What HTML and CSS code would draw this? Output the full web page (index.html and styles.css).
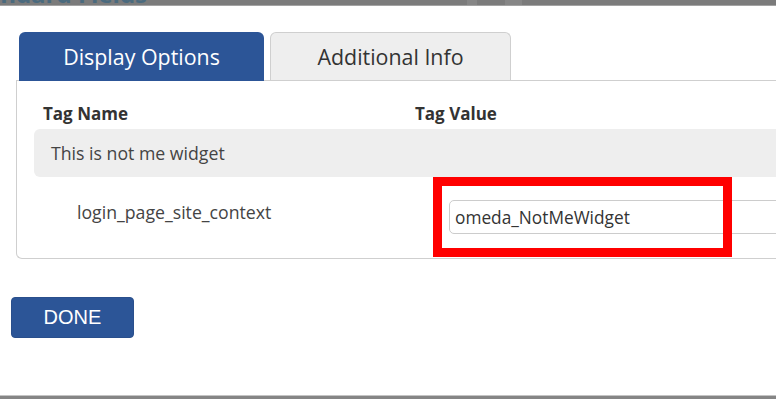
FILE: index.html
```html
<!DOCTYPE html>
<html>
<head>
<meta charset="utf-8">
<link rel="stylesheet" href="styles.css">
</head>
<body>
<div class="topbar">
  <span class="topbar-title">Standard Fields</span>
  <span class="topbar-patch p1"></span>
  <span class="topbar-patch p2"></span>
</div>
<div class="modal">
  <div class="tabs">
    <div class="tab tab-active">Display Options</div>
    <div class="tab tab-inactive">Additional Info</div>
  </div>
  <div class="panel">
    <div class="grid head">
      <div class="th">Tag Name</div>
      <div class="th">Tag Value</div>
    </div>
    <div class="group-row">This is not me widget</div>
    <div class="grid field-row">
      <div class="label">login_page_site_context</div>
      <div class="value">
        <input class="input" type="text" value="omeda_NotMeWidget">
        <div class="highlight"></div>
      </div>
    </div>
  </div>
  <div class="actions">
    <button class="done">DONE</button>
  </div>
</div>
<div class="bottombar"></div>
</body>
</html>
```

FILE: styles.css
```css
html, body {
  margin: 0;
  padding: 0;
  background: #ffffff;
  overflow: hidden;
  width: 776px;
  height: 409px;
}
body {
  font-family: "Open Sans", "DejaVu Sans", sans-serif;
  color: #333333;
}
.topbar {
  position: relative;
  height: 5px;
  background: #7b7b7b;
  border-bottom: 1px solid #a3a3a3;
  overflow: hidden;
}
.topbar-title {
  position: absolute;
  left: -38px;
  top: -20px;
  font-family: "Open Sans", sans-serif;
  font-weight: 700;
  font-size: 24px;
  line-height: 28px;
  color: #4a6a7e;
  white-space: nowrap;
}
.topbar-patch {
  position: absolute;
  top: 0;
  height: 5px;
  background: #868686;
}
.p1 { left: 467px; width: 10px; }
.p2 { left: 505px; width: 17px; }

.modal {
  height: 389px;
  background: #ffffff;
}
.tabs {
  display: flex;
  gap: 6px;
  padding: 26px 0 0 19px;
  position: relative;
  z-index: 2;
}
.tab {
  box-sizing: border-box;
  height: 49px;
  display: flex;
  align-items: center;
  justify-content: center;
  font-size: 21.4px;
  border-radius: 6px 6px 0 0;
}
.tab-active {
  width: 245px;
  background: #2c5597;
  color: #ffffff;
}
.tab-inactive {
  width: 241px;
  height: 48px;
  background: #eeeeee;
  color: #333333;
  border: 1px solid #cfcfcf;
  border-bottom: none;
}
.panel {
  box-sizing: border-box;
  margin: -1px 0 0 16px;
  width: 800px;
  height: 179px;
  border: 1px solid #cfcfcf;
  border-right: none;
  border-radius: 0 0 0 6px;
  padding: 0 0 0 17px;
  position: relative;
  z-index: 1;
}
.grid {
  display: grid;
  grid-template-columns: 381px 1fr;
}
.head {
  padding: 22px 0 0 9px;
  height: 48px;
  box-sizing: border-box;
}
.head .th:nth-child(2) {
  margin-left: -9px;
}
.th {
  font-weight: 700;
  font-size: 17px;
  line-height: 22px;
  color: #333333;
}
.group-row {
  height: 48px;
  background: #eeeeee;
  border-radius: 6px 0 0 6px;
  padding-left: 17px;
  display: flex;
  align-items: center;
  font-size: 17.7px;
  color: #444444;
}
.field-row {
  padding-top: 22px;
}
.label {
  padding: 0 0 0 43px;
  font-size: 17.7px;
  color: #444444;
  line-height: 26px;
}
.value {
  position: relative;
  padding-left: 34px;
}
.input {
  box-sizing: border-box;
  width: 400px;
  height: 34px;
  margin-top: 1px;
  border: 1px solid #cccccc;
  border-radius: 5px;
  padding: 0 5px;
  font-family: "Open Sans", "DejaVu Sans", sans-serif;
  font-size: 17.3px;
  color: #333333;
  background: #ffffff;
  outline: none;
}
.highlight {
  position: absolute;
  left: 18px;
  top: -22px;
  width: 299px;
  height: 80px;
  box-sizing: border-box;
  border: 9px solid #ff0000;
  pointer-events: none;
}
.actions {
  padding: 38px 0 0 11px;
}
.done {
  width: 123px;
  height: 41px;
  background: #2c5597;
  color: #ffffff;
  border: 1px solid #2a4f8c;
  border-radius: 4px;
  font-family: "Liberation Sans", Arial, sans-serif;
  font-size: 20px;
  padding: 0;
  cursor: pointer;
}
.bottombar {
  height: 3px;
  background: #858585;
  border-top: 1px solid #c4c4c4;
}
```
